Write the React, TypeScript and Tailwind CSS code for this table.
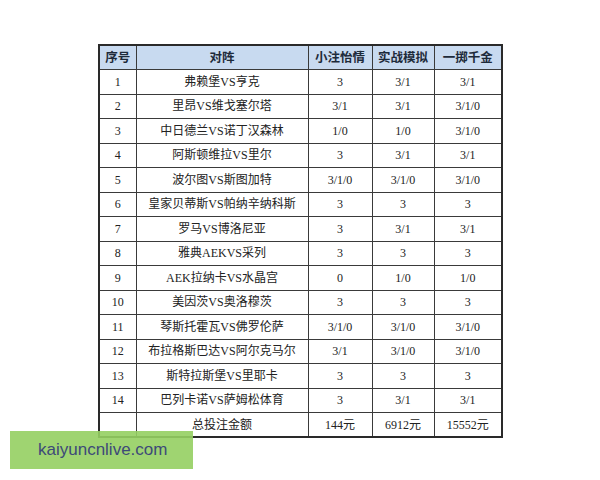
import React from "react";

const rows: [string, string, string, string, string][] = [
  ["1", "弗赖堡VS亨克", "3", "3/1", "3/1"],
  ["2", "里昂VS维戈塞尔塔", "3/1", "3/1", "3/1/0"],
  ["3", "中日德兰VS诺丁汉森林", "1/0", "1/0", "3/1/0"],
  ["4", "阿斯顿维拉VS里尔", "3", "3/1", "3/1"],
  ["5", "波尔图VS斯图加特", "3/1/0", "3/1/0", "3/1/0"],
  ["6", "皇家贝蒂斯VS帕纳辛纳科斯", "3", "3", "3"],
  ["7", "罗马VS博洛尼亚", "3", "3/1", "3/1"],
  ["8", "雅典AEKVS采列", "3", "3", "3"],
  ["9", "AEK拉纳卡VS水晶宫", "0", "1/0", "1/0"],
  ["10", "美因茨VS奥洛穆茨", "3", "3", "3"],
  ["11", "琴斯托霍瓦VS佛罗伦萨", "3/1/0", "3/1/0", "3/1/0"],
  ["12", "布拉格斯巴达VS阿尔克马尔", "3/1", "3/1/0", "3/1/0"],
  ["13", "斯特拉斯堡VS里耶卡", "3", "3", "3"],
  ["14", "巴列卡诺VS萨姆松体育", "3", "3/1", "3/1"],
];

const font = { fontFamily: '"Liberation Serif", "Noto Sans CJK SC", serif' };
const headFont = { fontFamily: '"Noto Sans CJK SC", sans-serif' };

export default function App() {
  const cell = "border border-[#3a3a3a] text-center p-0 h-[24.5px] text-[12px] text-[#222]";
  const head = "border border-[#3a3a3a] text-center p-0 h-[24.5px] text-[12.5px] font-bold text-[#1d2a3a] bg-[#c8daf0]";
  return (
    <div className="relative w-[600px] h-[480px] bg-white overflow-hidden" style={font}>
      <div className="pt-[44px] pl-[98px]">
        <table className="border-collapse border-2 border-[#2a2a2a] table-fixed w-[403px]">
          <colgroup>
            <col className="w-[37px]" />
            <col className="w-[172px]" />
            <col className="w-[64px]" />
            <col className="w-[62px]" />
            <col className="w-[68px]" />
          </colgroup>
          <thead style={headFont}>
            <tr>
              <th className={head}>序号</th>
              <th className={head}>对阵</th>
              <th className={head}>小注怡情</th>
              <th className={head}>实战模拟</th>
              <th className={head}>一掷千金</th>
            </tr>
          </thead>
          <tbody>
            {rows.map((r) => (
              <tr key={r[0]}>
                {r.map((c, i) => (
                  <td key={i} className={cell}>{c}</td>
                ))}
              </tr>
            ))}
            <tr>
              <td className={cell}></td>
              <td className={cell}>总投注金额</td>
              <td className={cell}>144元</td>
              <td className={cell}>6912元</td>
              <td className={cell}>15552元</td>
            </tr>
          </tbody>
        </table>
      </div>
      <div className="absolute left-[10px] top-[431px] w-[183px] h-[38px] bg-[#95cf62]/90 flex items-center pl-[28px]">
        <span className="text-[17px] text-[#3d4a78]" style={{ fontFamily: '"Liberation Sans", Arial, sans-serif' }}>kaiyuncnlive.com</span>
      </div>
    </div>
  );
}
